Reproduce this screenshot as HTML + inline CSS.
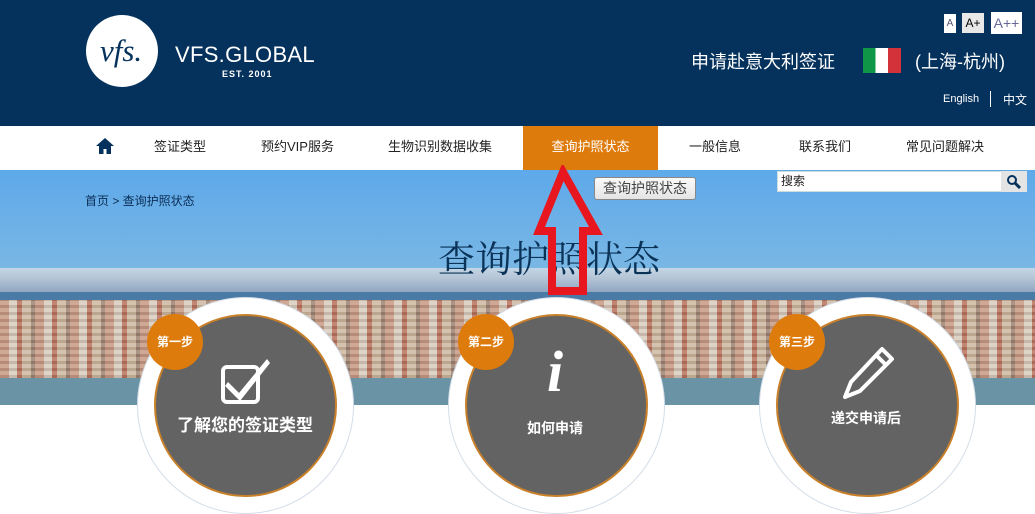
<!DOCTYPE html>
<html><head><meta charset="utf-8"><style>
*{margin:0;padding:0;box-sizing:border-box}
body{width:1035px;height:513px;overflow:hidden;background:#fff;font-family:"Liberation Sans","Noto Sans CJK SC",sans-serif;position:relative}
.hdr{position:absolute;left:0;top:0;width:1035px;height:126px;background:#05325c}
.nav{position:absolute;left:0;top:126px;width:1035px;height:44px;background:#fff}
.nav span{position:absolute;top:0;height:44px;line-height:42px;font-size:13px;color:#222;text-align:center}
.ban{position:absolute;left:0;top:170px;width:1035px;height:235px;background:linear-gradient(#5ea9ea 0%,#7bb8e4 45%,#a9cde4 50%)}
.abs{position:absolute}
.circ{position:absolute;border-radius:50%}
.badge{position:absolute;width:56px;height:56px;border-radius:50%;background:#de7b0d;color:#fff;font-size:12px;font-weight:bold;line-height:56px;text-align:center}
.lbl{position:absolute;color:#fff;font-weight:bold;text-align:center}
</style></head><body>
<div class="hdr"></div>
<div class="circ" style="left:86px;top:15px;width:72px;height:72px;background:#fff"></div>
<div class="abs" style="left:100px;top:33px;font-family:'Liberation Serif',serif;font-style:italic;font-size:31px;color:#05325c">vfs.</div>
<div class="abs" style="left:175px;top:42px;font-size:22px;color:#fff;letter-spacing:0.3px">VFS.GLOBAL</div>
<div class="abs" style="left:222px;top:69px;font-size:9px;color:#fff;font-weight:bold;letter-spacing:1px">EST. 2001</div>
<div class="abs" style="left:944px;top:14px;width:12px;height:19px;background:#fff;color:#557;font-size:10px;text-align:center;line-height:19px">A</div>
<div class="abs" style="left:962px;top:13px;width:22px;height:20px;background:#e8e8e8;color:#000;font-size:12px;text-align:center;line-height:20px">A+</div>
<div class="abs" style="left:991px;top:12px;width:31px;height:22px;background:#fff;color:#669;font-size:14px;text-align:center;line-height:22px">A++</div>
<div class="abs" style="left:691px;top:48px;font-size:18px;color:#fff">申请赴意大利签证</div>
<div class="abs" style="left:863px;top:48px;width:38px;height:25px;background:linear-gradient(90deg,#0f9747 33%,#fff 33%,#fff 66%,#d3323b 66%)"></div>
<div class="abs" style="left:915px;top:48px;font-size:18px;color:#fff">(上海-杭州)</div>
<div class="abs" style="left:943px;top:93px;font-size:11px;color:#fff">English</div>
<div class="abs" style="left:990px;top:91px;width:1px;height:16px;background:#fff"></div>
<div class="abs" style="left:1003px;top:91px;font-size:12px;color:#fff">中文</div>

<div class="nav">
<svg class="abs" style="left:95px;top:11px" width="20" height="18" viewBox="0 0 20 18"><path d="M10 1L1 9h3v8h4.5v-5h3v5H16V9h3z" fill="#05325c"/></svg>
<span style="left:140px;width:80px">签证类型</span>
<span style="left:250px;width:95px">预约VIP服务</span>
<span style="left:380px;width:120px">生物识别数据收集</span>
<span style="left:523px;width:135px;background:#de7b0d;color:#fff">查询护照状态</span>
<span style="left:675px;width:80px">一般信息</span>
<span style="left:785px;width:80px">联系我们</span>
<span style="left:895px;width:100px">常见问题解决</span>
</div>

<div class="ban">
<div class="abs" style="left:0;top:98px;width:1035px;height:26px;background:linear-gradient(#c4d6e6,#b4c4d6 40%,#8aa2be)"></div>
<div class="abs" style="left:0;top:122px;width:1035px;height:10px;background:#4a7aa6"></div>
<div class="abs" style="left:0;top:130px;width:1035px;height:82px;background:repeating-linear-gradient(90deg,#c79a84 0 9px,#d8cbbd 9px 17px,#b8725c 17px 22px,#cdb8a0 22px 31px,#9c8272 31px 35px)"></div>
<div class="abs" style="left:0;top:130px;width:1035px;height:82px;background:repeating-linear-gradient(0deg,rgba(255,255,255,.15) 0 4px,rgba(60,40,30,.12) 4px 7px)"></div>
<div class="abs" style="left:0;top:208px;width:1035px;height:27px;background:#6a94a6"></div>
</div>
<div class="abs" style="left:85px;top:192px;font-size:12px;color:#0b2d55">首页 &gt; 查询护照状态</div>
<div class="abs" style="left:438px;top:229px;font-size:37px;color:#0b3358;font-family:'Liberation Serif','Noto Serif CJK SC',serif">查询护照状态</div>
<div class="abs" style="left:594px;top:177px;width:102px;height:23px;border:1px solid #888;border-radius:3px;background:linear-gradient(#fafafa,#e4e4e4);font-size:14px;color:#444;text-align:center;line-height:21px">查询护照状态</div>
<div class="abs" style="left:777px;top:171px;width:250px;height:21px;background:#fff;border:1px solid #cdd;font-size:12px;line-height:19px;padding-left:3px;color:#222">搜索</div>
<div class="abs" style="left:1001px;top:171px;width:26px;height:21px;background:#e4e4e4"></div>
<svg class="abs" style="left:1006px;top:174px" width="16" height="15" viewBox="0 0 16 15"><circle cx="6" cy="6" r="4" stroke="#05325c" stroke-width="2" fill="none"/><path d="M9 9l5 5" stroke="#05325c" stroke-width="3"/></svg>
<svg class="abs" style="left:530px;top:165px" width="75" height="135" viewBox="0 0 75 135"><path d="M33 7L9 66h13v60h31V66h13z" fill="none" stroke="#e8161f" stroke-width="8" stroke-linejoin="miter"/></svg>

<div class="circ" style="left:137px;top:297px;width:217px;height:217px;background:#fff;border:1px solid #d4dde8"></div>
<div class="circ" style="left:154px;top:314px;width:183px;height:183px;background:#636363;border:2px solid #c8802a"></div>
<div class="badge" style="left:147px;top:314px">第一步</div>
<svg class="abs" style="left:220px;top:357px" width="54" height="50" viewBox="0 0 54 50"><rect x="3" y="10" width="35" height="35" rx="4" fill="none" stroke="#fff" stroke-width="4"/><path d="M8 25l11 11L47 2l3 4-30 38-15-15z" fill="#fff"/></svg>
<div class="lbl" style="left:150px;top:411px;width:190px;font-size:17px">了解您的签证类型</div>

<div class="circ" style="left:448px;top:297px;width:217px;height:217px;background:#fff;border:1px solid #d4dde8"></div>
<div class="circ" style="left:465px;top:314px;width:183px;height:183px;background:#636363;border:2px solid #c8802a"></div>
<div class="badge" style="left:458px;top:314px">第二步</div>
<div class="lbl" style="left:520px;top:338px;width:70px;font-size:58px;font-family:'Liberation Serif',serif;font-style:italic">i</div>
<div class="lbl" style="left:480px;top:418px;width:150px;font-size:14px">如何申请</div>

<div class="circ" style="left:759px;top:297px;width:217px;height:217px;background:#fff;border:1px solid #d4dde8"></div>
<div class="circ" style="left:776px;top:314px;width:183px;height:183px;background:#636363;border:2px solid #c8802a"></div>
<div class="badge" style="left:769px;top:314px">第三步</div>
<svg class="abs" style="left:840px;top:345px" width="56" height="56" viewBox="0 0 56 56"><path d="M42 4l10 10-32 32-15 6 6-15z" fill="none" stroke="#fff" stroke-width="4" stroke-linejoin="round"/><path d="M36 10l10 10" stroke="#fff" stroke-width="4"/></svg>
<div class="lbl" style="left:791px;top:408px;width:150px;font-size:14px">递交申请后</div>
</body></html>
